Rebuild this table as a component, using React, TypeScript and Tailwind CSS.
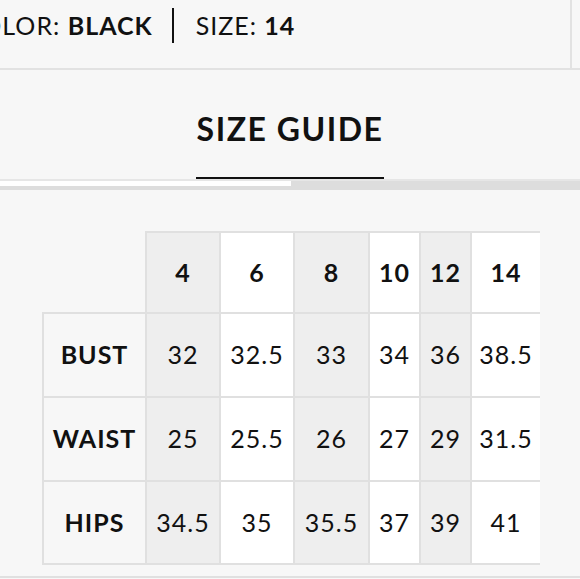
import React from 'react'

const sizes = ['4', '6', '8', '10', '12', '14']
const rows = [
  { label: 'BUST', values: ['32', '32.5', '33', '34', '36', '38.5'] },
  { label: 'WAIST', values: ['25', '25.5', '26', '27', '29', '31.5'] },
  { label: 'HIPS', values: ['34.5', '35', '35.5', '37', '39', '41'] },
]

// shaded columns alternate with white ones
const colBg = ['bg-[#eeeeee]', 'bg-white', 'bg-[#eeeeee]', 'bg-white', 'bg-[#eeeeee]', 'bg-white']

const SizeGuide: React.FC = () => {
  return (
    <div className="w-[580px] h-[579px] overflow-hidden bg-[#f7f7f7] text-[#111] font-['Lato','Liberation_Sans',sans-serif]">
      <div className="h-[70px] border-b-2 border-[#e2e2e2] flex">
        <div className="w-[572px] border-r-2 border-[#e2e2e2] overflow-hidden">
          <div className="flex items-center ml-[-36px] mt-[7px] text-[25px] tracking-[1px] whitespace-nowrap">
            <span>
              COLOR: <span className="font-bold">BLACK</span>
            </span>
            <span className="inline-block w-[2px] h-[35px] bg-[#111] ml-[19px] mr-[22px]" />
            <span>
              SIZE: <span className="font-bold">14</span>
            </span>
          </div>
        </div>
      </div>

      <div className="h-[109px] flex justify-center">
        <div className="w-[188px] pt-[35px] h-[109px] border-b-2 border-[#111] text-center text-[32px] font-bold tracking-[1.5px] leading-normal">
          SIZE GUIDE
        </div>
      </div>
      <div className="h-[11px] bg-[#dddddd] border-t-2 border-[#e6e6e6]">
        <div className="w-[291px] h-[5px] bg-white" />
      </div>

      <div className="h-[41px]" />

      <div className="ml-[42px] w-[498px] overflow-hidden">
        <div className="grid grid-cols-[103px_74px_74px_75px_51px_51px_70px] grid-rows-[81px_84px_84px_85px] text-[25px] tracking-[1px]">
          <div />
          {sizes.map((s, i) => (
            <div
              key={s}
              className={`flex items-center justify-center font-bold border-l-2 border-t-2 border-[#e0e0e0] ${colBg[i]}`}
            >
              {s}
            </div>
          ))}
          {rows.map((r, ri) => (
            <React.Fragment key={r.label}>
              <div
                className={`flex items-center justify-center font-bold border-l-2 border-t-2 border-[#e0e0e0] bg-[#f7f7f7] ${ri === rows.length - 1 ? 'border-b-2' : ''}`}
              >
                {r.label}
              </div>
              {r.values.map((v, i) => (
                <div
                  key={i}
                  className={`flex items-center justify-center border-l-2 border-t-2 border-[#e0e0e0] ${colBg[i]} ${ri === rows.length - 1 ? 'border-b-2' : ''}`}
                >
                  {v}
                </div>
              ))}
            </React.Fragment>
          ))}
        </div>
      </div>

      <div className="mt-[11px] h-[2px] bg-[#e0e0e0]" />
    </div>
  )
}

export default function App() {
  return <SizeGuide />
}
